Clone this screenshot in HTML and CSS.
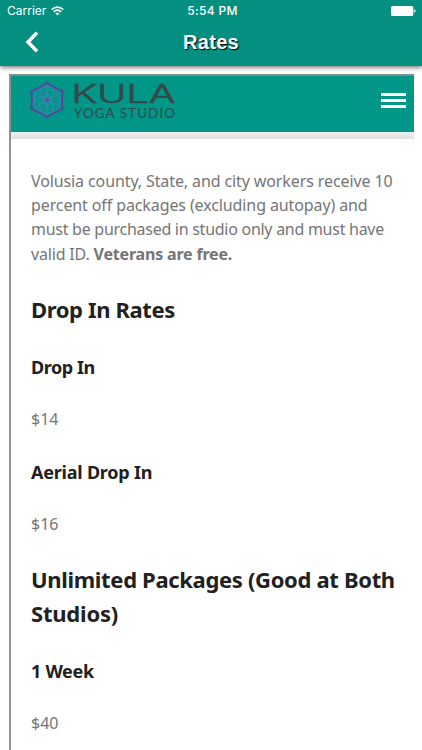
FILE: index.html
```html
<!DOCTYPE html>
<html lang="en">
<head>
<meta charset="utf-8">
<title>Rates</title>
<link rel="stylesheet" href="styles.css">
</head>
<body>
<header class="app-bar">
  <div class="status">
    <div class="carrier"><span>Carrier</span>
      <svg width="13" height="10" viewBox="0 0 13 10" fill="none" stroke="#fff" stroke-width="1.6"><path d="M.7 3.6Q6.5-1.5 12.3 3.6M2.8 5.8Q6.5 2.5 10.2 5.8"/><path d="M6.5 9.5 4.4 7.4Q6.5 5.7 8.6 7.4Z" fill="#fff" stroke="none"/></svg>
    </div>
    <span class="time">5:54 PM</span>
    <svg class="battery" width="25" height="10" viewBox="0 0 25 10" fill="#fff"><rect width="22.3" height="10" rx="1.5"/><path d="M23.2 3.3q1.4.3 1.4 1.7t-1.4 1.7z"/></svg>
  </div>
  <div class="nav">
    <svg class="back" width="14" height="22" viewBox="0 0 14 22" fill="none" stroke="#fff" stroke-width="3.5"><path d="M12 1.6 3 11l9 9.4"/></svg>
    <h1>Rates</h1>
  </div>
</header>
<main class="frame">
  <div class="site-header">
    <svg class="logo" width="150" height="42" viewBox="0 0 150 42">
      <g fill="none" stroke="#3a86b4" stroke-width=".8">
        <circle cx="18" cy="19" r="14"/><circle cx="18" cy="19" r="5"/>
        <circle cx="18" cy="12" r="7"/><circle cx="18" cy="26" r="7"/><circle cx="12" cy="15.5" r="7"/><circle cx="24" cy="15.5" r="7"/><circle cx="12" cy="22.5" r="7"/><circle cx="24" cy="22.5" r="7"/>
        <path d="M18 5v28M6 12l24 14M6 26l24-14"/>
      </g>
      <path d="M18 1.7Q25 6.8 33.6 10.2Q32.6 19 33.6 27.8Q25 31.2 18 36.3Q11 31.2 2.4 27.8Q3.4 19 2.4 10.2Q11 6.8 18 1.7Z" fill="none" stroke="#584498" stroke-width="1.9"/>
      <circle cx="18" cy="19" r="2" fill="#6547a0"/>
      <text class="brand" x="42.5" y="22" textLength="104" lengthAdjust="spacingAndGlyphs">KULA</text>
      <text class="tagline" x="45" y="36.7" textLength="101" lengthAdjust="spacing">YOGA STUDIO</text>
    </svg>
    <svg class="menu" width="25" height="16" viewBox="0 0 25 16" fill="#fff"><path d="M0 0h25v3H0zM0 6h25v3H0zM0 12h25v3H0z"/></svg>
  </div>
  <div class="header-shadow"></div>
  <article class="content">
    <p><span class="line l1">Volusia county, State, and city workers receive 10</span> <span class="line l2">percent off packages (excluding autopay) and</span> <span class="line l3">must be purchased in studio only and must have</span> <span class="line l4">valid ID. <strong>Veterans are free.</strong></span></p>
    <h2 class="drop">Drop In Rates</h2>
    <h3 class="dropin">Drop In</h3>
    <p>$14</p>
    <h3 class="aerial">Aerial Drop In</h3>
    <p>$16</p>
    <h2><span class="line u1">Unlimited Packages (Good at Both</span> <span class="line u2">Studios)</span></h2>
    <h3 class="week">1 Week</h3>
    <p>$40</p>
  </article>
</main>
</body>
</html>
```
FILE: styles.css
```css
* { box-sizing: border-box; }
body {
  margin: 0;
  height: 750px;
  overflow: hidden;
  background: #fff;
  font-family: "Noto Sans", sans-serif;
}
svg { display: block; flex: none; }
.app-bar {
  height: 66px;
  color: #fff;
  background: #048f81;
  box-shadow: 0 1px 5px rgba(0, 0, 0, .65);
}
.status {
  display: grid;
  grid-template-columns: 1fr auto 1fr;
  align-items: center;
  height: 22px;
  padding: 0 6px 0 7px;
  font: 12px/22px Inter, sans-serif;
}
.carrier { display: flex; align-items: center; gap: 5px; }
.time { padding-left: 2px; font-weight: 500; letter-spacing: .3px; }
.battery { justify-self: end; }
.nav {
  display: grid;
  grid-template-columns: 60px 1fr 60px;
  align-items: center;
  height: 40px;
}
.back { margin-left: 25px; }
h1 {
  margin: 0;
  text-align: center;
  font: bold 20px/40px "Liberation Sans", sans-serif;
  letter-spacing: .35px;
  text-shadow: 1px 1px 1px #000;
}
.frame {
  height: 676px;
  margin: 8px 8px 0 9px;
  border-top: 2px solid #7b918e;
  border-left: 2px solid #919191;
}
.site-header {
  display: flex;
  align-items: flex-start;
  justify-content: space-between;
  height: 56px;
  padding: 5px 8px 0 18px;
  background: #009688;
}
.logo { overflow: visible; }
.menu { margin-top: 12px; }
.brand { font: 300 25px Inter, sans-serif; fill: #35484b; stroke: #35484b; stroke-width: .6px; }
.tagline { font: 13.5px Lato, sans-serif; fill: #35484b; }
.header-shadow {
  height: 7px;
  background: linear-gradient(#f0f0f0, #dedede);
}
.content {
  display: flex;
  flex-direction: column;
  gap: 26.6px;
  padding: 29.5px 0 0 20px;
  white-space: nowrap;
}
.content p, .content h2, .content h3 { margin: 0; }
.content p { color: #757575; font-size: 16px; line-height: 24.4px; }
.content h2 {
  margin: -1px 0 1px;
  color: #212121;
  font-size: 22px;
  line-height: 34px;
}
.content h3 {
  padding-top: 1px;
  margin-bottom: -1px;
  color: #212121;
  font-size: 18px;
  line-height: 27px;
}
.line { display: block; }
.l1, .l2 { letter-spacing: -.11px; }
.l3 { letter-spacing: -.27px; }
.l4 { letter-spacing: -.18px; }
.drop { letter-spacing: -.38px; }
.dropin { letter-spacing: -.43px; }
.aerial { letter-spacing: -.22px; }
.u1 { letter-spacing: -.33px; }
.u2 { letter-spacing: -.2px; }
.week { letter-spacing: -.3px; }
```
